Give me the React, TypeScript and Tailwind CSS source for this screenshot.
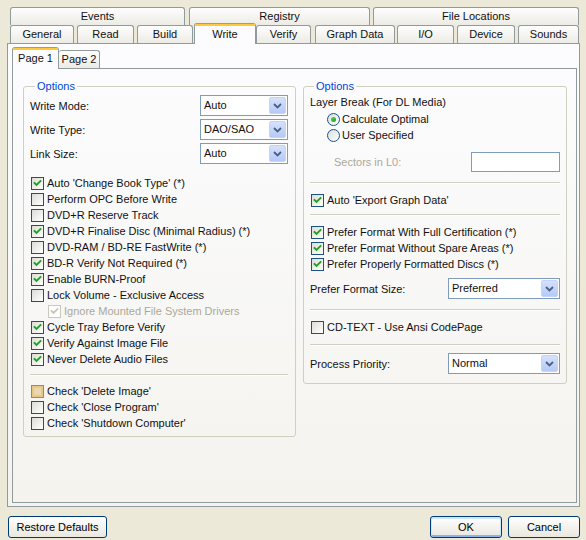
import React from "react";

type Tab = { label: string; cls: string; active?: boolean };

const topTabs: Tab[] = [
  { label: "Events", cls: "w-[175px]" },
  { label: "Registry", cls: "ml-[4px] w-[181px]" },
  { label: "File Locations", cls: "ml-[3px] w-[206px]" },
];

const tabs: Tab[] = [
  { label: "General", cls: "w-[64px]" },
  { label: "Read", cls: "ml-[3px] w-[57px]" },
  { label: "Build", cls: "ml-[3px] w-[56px]" },
  { label: "Write", cls: "ml-px w-[62px]", active: true },
  { label: "Verify", cls: "w-[55px]" },
  { label: "Graph Data", cls: "ml-[4px] w-[80px]" },
  { label: "I/O", cls: "ml-[2px] w-[57px]" },
  { label: "Device", cls: "ml-[3px] w-[58px]" },
  { label: "Sounds", cls: "ml-[3px] w-[61px]" },
];

const TabButton = ({ tab }: { tab: Tab }) =>
  tab.active ? (
    <div
      className={`${tab.cls} relative z-10 h-[21px] -mb-px flex flex-col rounded-t-[3px] border border-b-0 border-[#919B9C] border-t-[#E68B2C] bg-[#FCFCFE]`}
    >
      <div className="h-[2px] bg-[#FFC73C]" />
      <div className="flex-1 flex items-center justify-center pb-[2px]">{tab.label}</div>
    </div>
  ) : (
    <div
      className={`${tab.cls} h-[18px] flex items-center justify-center rounded-t-[3px] border border-b-0 border-[#919B9C] bg-linear-to-b from-[#FEFEFE] to-[#ECEBE5]`}
    >
      {tab.label}
    </div>
  );

const CheckMark = ({ color }: { color: string }) => (
  <svg width="11" height="11" viewBox="0 0 11 11" className="absolute left-0 top-0">
    <polyline points="2.5,5 4.5,7 8.5,3" fill="none" stroke={color} strokeWidth="1.9" strokeLinecap="square" />
  </svg>
);

const CheckBox = ({ checked = false, disabled = false, hot = false }: { checked?: boolean; disabled?: boolean; hot?: boolean }) => {
  const skin = disabled
    ? "border-[#CAC8BB] bg-white"
    : hot
    ? "border-[#9C8A62] bg-[#EBD8A8] shadow-[inset_0_0_0_2px_#E6C98A]"
    : "border-[#1C5180] bg-linear-to-br from-[#DCDCD7] to-white";
  return (
    <span className={`relative block w-[13px] h-[13px] shrink-0 border ${skin}`}>
      {checked && <CheckMark color={disabled ? "#CAC8BB" : "#21A121"} />}
    </span>
  );
};

const CheckRow = ({
  label,
  checked,
  disabled,
  hot,
  indent = "ml-px",
}: {
  label: string;
  checked?: boolean;
  disabled?: boolean;
  hot?: boolean;
  indent?: string;
}) => (
  <div className={`flex items-center h-[16px] gap-[3px] ${indent}`}>
    <CheckBox checked={checked} disabled={disabled} hot={hot} />
    <span className={disabled ? "text-[#ACA899]" : ""}>{label}</span>
  </div>
);

const Radio = ({ label, on }: { label: string; on?: boolean }) => (
  <div className="flex items-center h-[16px] gap-[2px] ml-[17px]">
    <span className="flex items-center justify-center w-[13px] h-[13px] rounded-full border border-[#1C5180] bg-linear-to-br from-[#DCDCD7] to-white">
      {on && <span className="w-[5px] h-[5px] rounded-full bg-linear-to-br from-[#55D855] to-[#1A9A1A]" />}
    </span>
    <span>{label}</span>
  </div>
);

const Combo = ({ value, width }: { value: string; width: string }) => (
  <div className={`${width} h-[21px] flex items-center border border-[#7F9DB9] bg-white`}>
    <span className="flex-1 pl-[3px]">{value}</span>
    <span className="w-[17px] h-[17px] mr-px flex items-center justify-center rounded-[2px] border border-[#C3D3FD] bg-linear-to-b from-[#D4E1FC] to-[#B6CAF7]">
      <svg width="9" height="6" viewBox="0 0 9 6">
        <polyline points="1,1 4.5,4.5 8,1" fill="none" stroke="#4D6185" strokeWidth="1.8" />
      </svg>
    </span>
  </div>
);

const ComboRow = ({ label, value, width }: { label: string; value: string; width: string }) => (
  <div className="flex items-center justify-between h-[21px]">
    <span className="pt-px">{label}</span>
    <Combo value={value} width={width} />
  </div>
);

const Separator = ({ mt }: { mt: string }) => (
  <div className={`${mt} h-[2px] border-t border-[#D0CEC2] bg-white`} />
);

const PushButton = ({ label, width, isDefault }: { label: string; width: string; isDefault?: boolean }) => (
  <button
    className={`${width} h-[22px] rounded-[3px] border border-[#003C74] bg-linear-to-b from-white to-[#E9E7DF] text-black ${
      isDefault ? "shadow-[inset_0_1px_0_1px_#CEE7FF,inset_0_-1px_0_1px_#8FB1EA]" : ""
    }`}
  >
    {label}
  </button>
);

export default function App() {
  return (
    <div className="w-[586px] h-[540px] overflow-hidden bg-[#ECE9D8] pt-[7px] text-[11px] leading-[13px] text-[#111] font-['Liberation_Sans',Arial,sans-serif]">
      {/* outer tab strip, two rows */}
      <div className="flex pl-[10px]">
        {topTabs.map((t) => (
          <TabButton key={t.label} tab={t} />
        ))}
      </div>
      <div className="flex items-end h-[18px] pl-[10px]">
        {tabs.map((t) => (
          <TabButton key={t.label} tab={t} />
        ))}
      </div>

      {/* outer panel */}
      <div className="ml-[7px] w-[573px] h-[464px] border border-[#919B9C] bg-linear-to-b from-[#FCFCFE] to-[#F4F3EE] pl-[4px] pt-[3px]">
        <div className="flex items-end h-[21px]">
          <div className="relative z-10 w-[47px] h-[22px] -mb-px flex flex-col rounded-t-[3px] border border-b-0 border-[#919B9C] border-t-[#E68B2C] bg-[#FCFCFE]">
            <div className="h-[2px] bg-[#FFC73C]" />
            <div className="flex-1 flex items-center justify-center pb-[2px]">Page 1</div>
          </div>
          <div className="w-[41px] h-[18px] flex items-center justify-center rounded-t-[3px] border border-b-0 border-l-0 border-[#919B9C] bg-linear-to-b from-[#FEFEFE] to-[#ECEBE5]">
            Page 2
          </div>
        </div>

        {/* inner panel */}
        <div className="w-[565px] h-[435px] flex items-start border border-[#919B9C] bg-linear-to-b from-[#FCFCFE] to-[#F4F3EE] pl-[10px] pt-[11px]">
          {/* left group */}
          <fieldset className="m-0 min-w-0 w-[273px] rounded-[3px] border border-[#D0D0BF] pl-[6px] pr-[7px] pt-[2px] pb-[5px]">
            <legend className="ml-[5px] px-[2px] leading-[13px] text-[#0046D5]">Options</legend>
            <div className="flex flex-col gap-[3px]">
              <ComboRow label="Write Mode:" value="Auto" width="w-[88px]" />
              <ComboRow label="Write Type:" value="DAO/SAO" width="w-[88px]" />
              <ComboRow label="Link Size:" value="Auto" width="w-[88px]" />
            </div>
            <div className="mt-[11px] flex flex-col">
              <CheckRow label="Auto 'Change Book Type' (*)" checked />
              <CheckRow label="Perform OPC Before Write" />
              <CheckRow label="DVD+R Reserve Track" />
              <CheckRow label="DVD+R Finalise Disc (Minimal Radius) (*)" checked />
              <CheckRow label="DVD-RAM / BD-RE FastWrite (*)" />
              <CheckRow label="BD-R Verify Not Required (*)" checked />
              <CheckRow label="Enable BURN-Proof" checked />
              <CheckRow label="Lock Volume - Exclusive Access" />
              <CheckRow label="Ignore Mounted File System Drivers" checked disabled indent="ml-[18px]" />
              <CheckRow label="Cycle Tray Before Verify" checked />
              <CheckRow label="Verify Against Image File" checked />
              <CheckRow label="Never Delete Audio Files" checked />
            </div>
            <Separator mt="mt-[7px]" />
            <div className="mt-[7px] flex flex-col">
              <CheckRow label="Check 'Delete Image'" hot />
              <CheckRow label="Check 'Close Program'" />
              <CheckRow label="Check 'Shutdown Computer'" />
            </div>
          </fieldset>

          {/* right group */}
          <fieldset className="m-0 min-w-0 ml-[7px] w-[264px] rounded-[3px] border border-[#D0D0BF] pl-[6px] pr-[6px] pt-px pb-[9px]">
            <legend className="ml-[4px] px-[2px] leading-[13px] text-[#0046D5]">Options</legend>
            <div className="flex items-center h-[16px]">Layer Break (For DL Media)</div>
            <div className="mt-px flex flex-col">
              <Radio label="Calculate Optimal" on />
              <Radio label="User Specified" />
            </div>
            <div className="mt-[9px] flex items-center justify-between h-[20px]">
              <span className="ml-[24px] text-[#ACA899]">Sectors in L0:</span>
              <div className="w-[89px] h-[20px] border border-[#7F9DB9] bg-white" />
            </div>
            <Separator mt="mt-[10px]" />
            <div className="mt-[8px]">
              <CheckRow label="Auto 'Export Graph Data'" checked />
            </div>
            <Separator mt="mt-[6px]" />
            <div className="mt-[8px] flex flex-col">
              <CheckRow label="Prefer Format With Full Certification (*)" checked />
              <CheckRow label="Prefer Format Without Spare Areas (*)" checked />
              <CheckRow label="Prefer Properly Formatted Discs (*)" checked />
            </div>
            <div className="mt-[6px]">
              <ComboRow label="Prefer Format Size:" value="Preferred" width="w-[112px]" />
            </div>
            <Separator mt="mt-[10px]" />
            <div className="mt-[8px]">
              <CheckRow label="CD-TEXT - Use Ansi CodePage" />
            </div>
            <Separator mt="mt-[9px]" />
            <div className="mt-[7px]">
              <ComboRow label="Process Priority:" value="Normal" width="w-[112px]" />
            </div>
          </fieldset>
        </div>
      </div>

      {/* dialog buttons */}
      <div className="mt-[9px] flex items-center pl-[8px] pr-[6px]">
        <PushButton label="Restore Defaults" width="w-[99px]" />
        <div className="ml-auto flex gap-[6px]">
          <PushButton label="OK" width="w-[72px]" isDefault />
          <PushButton label="Cancel" width="w-[72px]" />
        </div>
      </div>
    </div>
  );
}
